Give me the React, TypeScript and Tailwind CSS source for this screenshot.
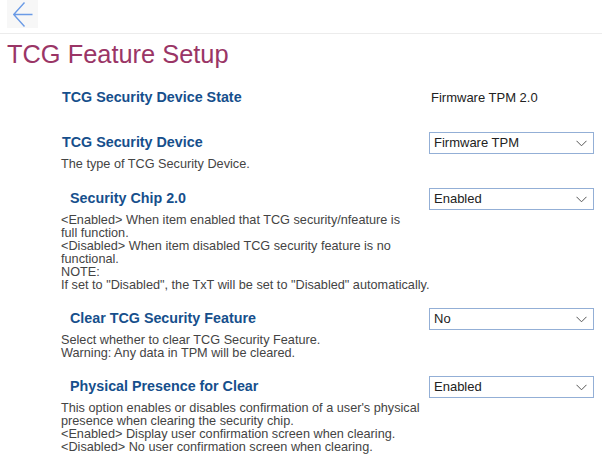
import React from "react"

interface Item {
  label: string
  indent?: boolean
  value?: string
  select?: string
  desc?: string[]
  gap: string
}

const items: Item[] = [
  { label: "TCG Security Device State", value: "Firmware TPM 2.0", gap: "mt-[18px]" },
  {
    label: "TCG Security Device",
    select: "Firmware TPM",
    desc: ["The type of TCG Security Device."],
    gap: "mt-[23px]",
  },
  {
    label: "Security Chip 2.0",
    indent: true,
    select: "Enabled",
    desc: [
      "<Enabled> When item enabled that TCG security/nfeature is",
      "full function.",
      "<Disabled> When item disabled TCG security feature is no",
      "functional.",
      "NOTE:",
      'If set to "Disabled", the TxT will be set to "Disabled" automatically.',
    ],
    gap: "mt-[17px]",
  },
  {
    label: "Clear TCG Security Feature",
    indent: true,
    select: "No",
    desc: [
      "Select whether to clear TCG Security Feature.",
      "Warning: Any data in TPM will be cleared.",
    ],
    gap: "mt-[16px]",
  },
  {
    label: "Physical Presence for Clear",
    indent: true,
    select: "Enabled",
    desc: [
      "This option enables or disables confirmation of a user's physical",
      "presence when clearing the security chip.",
      "<Enabled> Display user confirmation screen when clearing.",
      "<Disabled> No user confirmation screen when clearing.",
    ],
    gap: "mt-[16px]",
  },
]

function FakeSelect({ value }: { value: string }) {
  return (
    <div className="flex h-[22px] w-[165px] items-center justify-between border border-[#93afd6] bg-white pl-[4px] pr-[6px] text-[13px] text-[#222]">
      <span>{value}</span>
      <svg width="11" height="7" viewBox="0 0 11 7" fill="none">
        <path d="M0.5 0.8 L5.5 5.8 L10.5 0.8" stroke="#555" strokeWidth="1" />
      </svg>
    </div>
  )
}

export default function App() {
  return (
    <div
      className="min-h-[469px] w-[602px] bg-white"
      style={{ fontFamily: '"Liberation Sans", Arial, sans-serif' }}
    >
      <div className="h-[34px] border-b border-[#ececec]">
        <button className="ml-[7px] flex h-[28px] w-[31px] items-start bg-[#f7f7f7] pl-[6px] pt-[2px]">
          <svg width="20" height="26" viewBox="0 0 20 26" fill="none">
            <path d="M11.5 0.5 L0.7 12.5 L11.5 24.5 M0.7 12.5 H19.5" stroke="#6b9be6" strokeWidth="1.4" />
          </svg>
        </button>
      </div>

      <h1 className="mt-[5px] pl-[7px] text-[25.4px] leading-[30px] text-[#9a3566]">TCG Feature Setup</h1>

      <div className="pb-4 pl-[61px] pr-[8px]">
        {items.map((item) => (
          <div key={item.label} className={item.gap}>
            <div className="flex h-[22px] items-center justify-between">
              <span
                className={
                  "text-[14.3px] font-bold text-[#164f8c] " + (item.indent ? "ml-[9px]" : "ml-[1px]")
                }
              >
                {item.label}
              </span>
              {item.select ? (
                <FakeSelect value={item.select} />
              ) : (
                <span className="w-[165px] pl-[2px] text-[13px] text-[#222]">{item.value}</span>
              )}
            </div>
            {item.desc && (
              <div className="mt-[4px] text-[12.7px] leading-[13px] text-[#444]">
                {item.desc.map((line, i) => (
                  <div key={i} className="whitespace-nowrap">
                    {line}
                  </div>
                ))}
              </div>
            )}
          </div>
        ))}
      </div>
    </div>
  )
}
